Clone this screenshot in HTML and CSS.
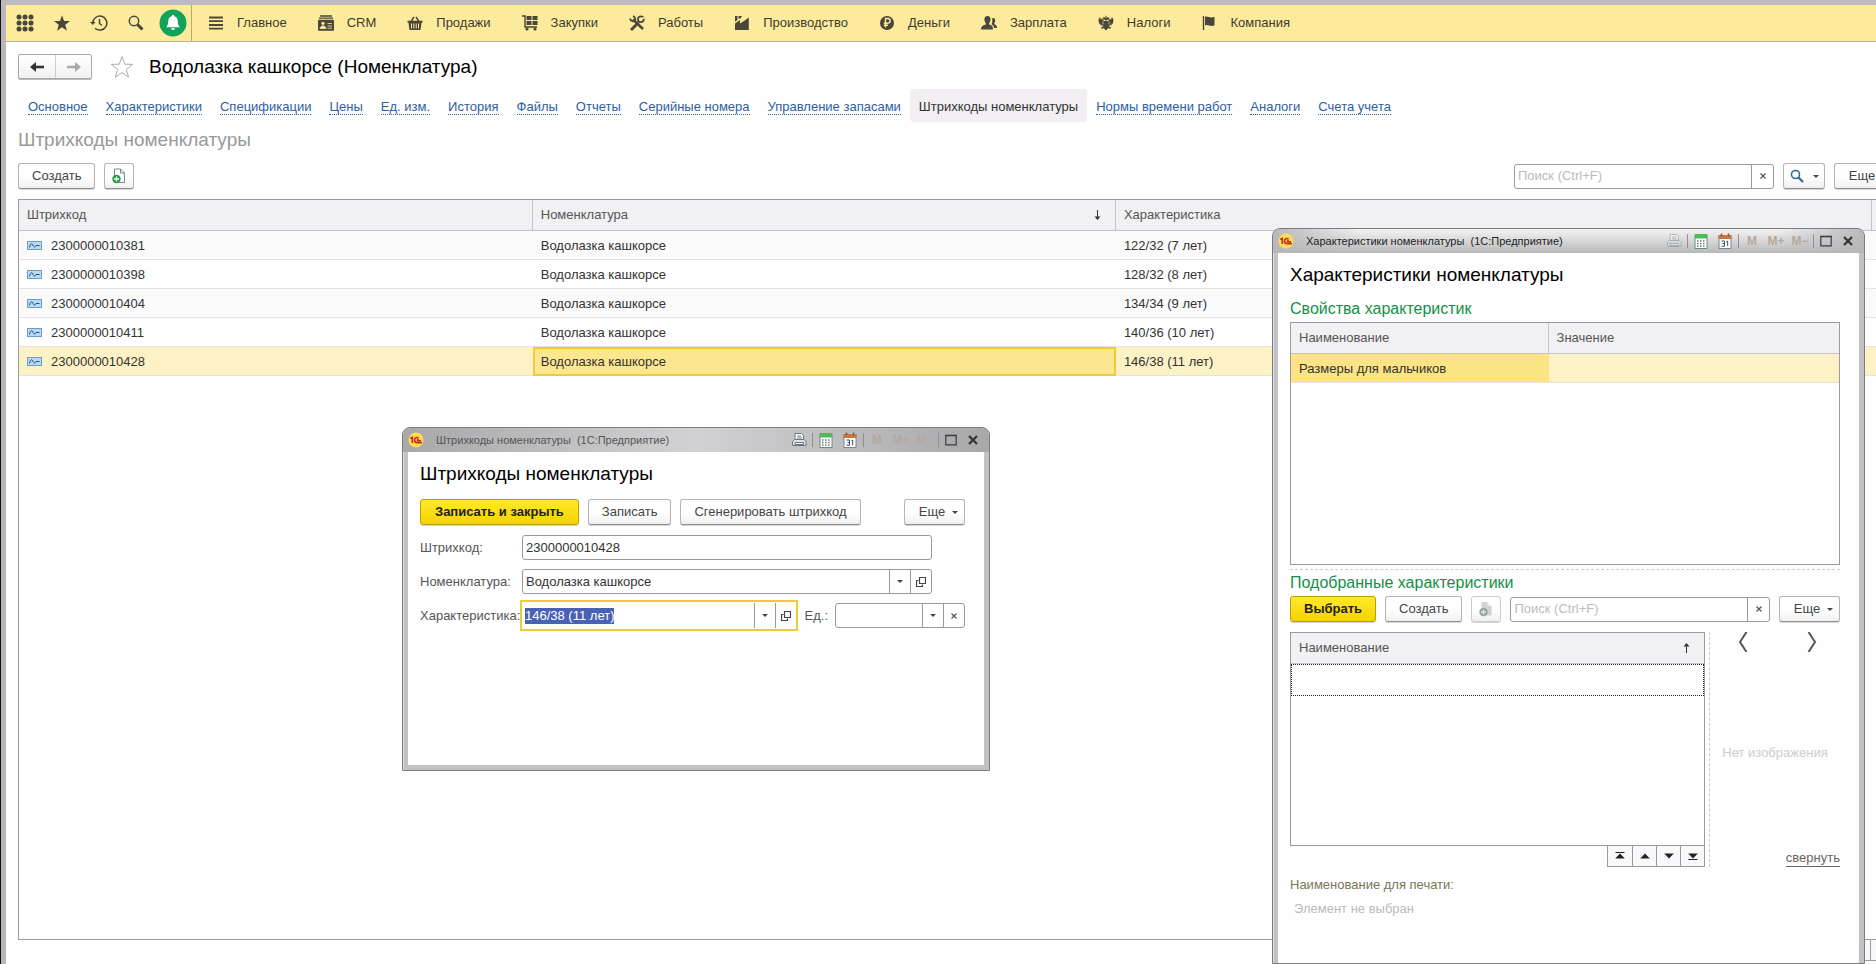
FILE: index.html
```html
<!DOCTYPE html>
<html lang="ru">
<head>
<meta charset="utf-8">
<title>Водолазка кашкорсе (Номенклатура)</title>
<link rel="stylesheet" href="styles.css">
</head>
<body>
<svg class="sprite" aria-hidden="true">
  <symbol id="i-printer" viewBox="0 0 16 16">
    <path d="M4 8V1.500h6.500l2 2V8" fill="#fff" stroke="#6d7680"/>
    <path d="M6 4h4M6 6h5" stroke="#6d7680"/>
    <path d="M1.500 9.500 3.500 7.500h9.500l2 2v4H1.500z" fill="#dfe3e8" stroke="#6d7680"/>
    <path d="M4 10.500h8.500v2H4z" fill="#fff" stroke="#6d7680"/>
  </symbol>
  <symbol id="i-calc" viewBox="0 0 14 16">
    <path d="M1 1.500h12v14H1z" fill="#fff" stroke="#6b8a70"/>
    <path d="M1 1h12v4.500H1z" fill="#4cbb58"/>
    <path d="M3 8h8M3 10.500h8M3 13h8" stroke="#6b7480" stroke-width="1.500" stroke-dasharray="1.500 1.500"/>
  </symbol>
  <symbol id="i-cal" viewBox="0 0 14 16">
    <path d="M1 2.500h12v13H1z" fill="#fff" stroke="#7a828c"/>
    <path d="M.5 2h13v4H.5z" fill="#c9793c"/>
    <path d="M3.500.5v3M10.500.5v3" stroke="#8a5a34" stroke-width="1.500"/>
    <path d="M3.500 8h3v5.200h-3M4.500 10.500h2M8.300 9l1.400-1v5.300" fill="none" stroke="#3f4c63"/>
  </symbol>
  <symbol id="i-max" viewBox="0 0 12 12"><path d="M.8 1.500h10.400v9.300H.8z" fill="none" stroke="#3a3c40" stroke-width="1.200"/><path d="M.2 1.500h11.600" stroke="#3a3c40" stroke-width="1.600"/></symbol>
  <symbol id="i-close" viewBox="0 0 12 12"><path d="M2 2l8 8M10 2l-8 8" stroke="#333" stroke-width="2.200"/></symbol>
  <symbol id="i-logo" viewBox="0 0 16 16">
    <circle cx="8" cy="8" r="7.500" fill="#fbdc55"/>
    <path d="M2.300 6.500 4.300 5.300V11M10.500 6.200C9 4.800 6.500 5.800 6.500 8c0 1.800 1.300 2.600 2.800 2.600H14M10.700 7.700c-1-.5-1.700.8-.6 1H13" fill="none" stroke="#cc2a1c" stroke-width="1.600"/>
  </symbol>
  <symbol id="i-x" viewBox="0 0 8 8"><path d="M1.500 1.500l5 5M6.500 1.500l-5 5" stroke="#555" stroke-width="1.200"/></symbol>
  <symbol id="i-open" viewBox="0 0 10 10"><path d="M3.500.5h6v6h-6z" fill="none" stroke="#444" stroke-width="1.200"/><path d="M2.500 3.500h-2v6h6v-2" fill="none" stroke="#444" stroke-width="1.200"/></symbol>
  <symbol id="i-newdoc" viewBox="0 0 16 16">
    <path d="M3.500 1h6l4 4v9.500h-10z" fill="#fff" stroke="#7d838a"/><path d="M9.500 1v4h4" fill="none" stroke="#7d838a"/>
    <circle cx="5.500" cy="11" r="4.200" fill="#2a9a3e"/><path d="M5.500 8.500v5M3 11h5" stroke="#fff" stroke-width="1.300"/>
  </symbol>
  <symbol id="i-newdoc-off" viewBox="0 0 16 16">
    <path d="M3.500 1h6l4 4v9.500h-10z" fill="#cfd3d3"/><path d="M9.500 1v4h4" fill="#eee"/>
    <circle cx="5.500" cy="11" r="4.200" fill="#9aa09e"/><path d="M5.500 8.500v5M3 11h5" stroke="#e4e6e6" stroke-width="1.300"/>
  </symbol>
  <symbol id="i-row" viewBox="0 0 15 9"><rect x=".5" y=".5" width="14" height="8" fill="#b9d8f2" stroke="#6f9cc4"/><path d="M2.500 6.500C3.500 2 5 2 6 4.200S8 6.800 9 4.500h3.500" fill="none" stroke="#1f4f86"/></symbol>
  <symbol id="i-star" viewBox="0 0 24 24"><path d="M12 1.500l2.700 7.700 8 .2-6.400 5 2.300 7.800L12 17.600l-6.600 4.600 2.300-7.800-6.400-5 8-.2z"/></symbol>
  <symbol id="i-first" viewBox="0 0 10 8"><path d="M.5.5h9" stroke="#222"/><path d="M5 1.500 9.800 6.500H.2z" fill="#222"/></symbol>
  <symbol id="i-up" viewBox="0 0 10 8"><path d="M5 1.500 9.800 6.500H.2z" fill="#222"/></symbol>
  <symbol id="i-down" viewBox="0 0 10 8"><path d="M5 6.500 9.800 1.500H.2z" fill="#222"/></symbol>
  <symbol id="i-last" viewBox="0 0 10 8"><path d="M.5 7.500h9" stroke="#222"/><path d="M5 6.500 9.800 1.500H.2z" fill="#222"/></symbol>
</svg>

<div class="app">
  <header class="menubar">
    <div class="quick">
      <button class="qbtn" aria-label="Меню"><svg width="18" height="18" viewBox="0 0 18 18" fill="#4a463a"><circle cx="3" cy="3" r="2.500"/><circle cx="9" cy="3" r="2.500"/><circle cx="15" cy="3" r="2.500"/><circle cx="3" cy="9" r="2.500"/><circle cx="9" cy="9" r="2.500"/><circle cx="15" cy="9" r="2.500"/><circle cx="3" cy="15" r="2.500"/><circle cx="9" cy="15" r="2.500"/><circle cx="15" cy="15" r="2.500"/></svg></button>
      <button class="qbtn" aria-label="Избранное"><svg width="18" height="18" viewBox="0 0 24 24" fill="#4a463a"><use href="#i-star"/></svg></button>
      <button class="qbtn" aria-label="История"><svg width="18" height="18" viewBox="0 0 18 18" fill="none" stroke="#4a463a" stroke-width="1.500"><path d="M2.800 9a7 7 0 1 1 2.200 5.200"/><path d="M9.500 5v4.500l2.500 2"/><path d="M0 8h5.600L2.800 11z" fill="#4a463a" stroke="none"/></svg></button>
      <button class="qbtn" aria-label="Поиск"><svg width="18" height="18" viewBox="0 0 18 18" fill="none" stroke="#4a463a"><circle cx="7" cy="7" r="4.700" stroke-width="1.500"/><path d="M10.500 10.500l5 5" stroke-width="3"/></svg></button>
      <button class="qbtn" aria-label="Уведомления"><svg width="28" height="28" viewBox="0 0 28 28"><circle cx="14" cy="14" r="13.500" fill="#12a35b"/><path d="M14 6c.9 0 1.300.6 1.300 1.300 2.700.8 3.500 3 3.500 5.500 0 2.800.8 4 2 5.400H7.200c1.200-1.400 2-2.600 2-5.400 0-2.500.8-4.700 3.500-5.500C12.700 6.600 13.100 6 14 6zM12 19.200h4c0 2.300-4 2.300-4 0z" fill="#fff"/></svg></button>
    </div>
    <nav class="sections">
      <a href="#"><svg viewBox="0 0 16 16"><path d="M1 2.500h14M1 6.200h14M1 10h14M1 13.700h14" stroke="#4a463a" stroke-width="1.800"/></svg>Главное</a>
      <a href="#"><svg viewBox="0 0 16 16"><path d="M2 1h12M1 3.200h14" stroke="#4a463a" stroke-width="1.300"/><rect y="4.700" width="16" height="11" rx="1" fill="#4a463a"/><circle cx="5" cy="8.300" r="1.600" fill="#fdeb9d"/><path d="M2 13.500c0-3.500 6-3.500 6 0zM9.500 8.500H14M9.500 11H14M9.500 13.200H14" fill="#fdeb9d" stroke="#fdeb9d" stroke-width=".8"/></svg>CRM</a>
      <a href="#"><svg viewBox="0 0 16 16"><path d="M4 6.500 7 2M12 6.500 9 2" stroke="#4a463a" stroke-width="1.400"/><path d="M.5 5.800h15v2h-1L13.500 15h-11L1.500 7.800h-1z" fill="#4a463a"/><path d="M4.500 8.500v5M6.800 8.500v5M9.200 8.500v5M11.500 8.500v5" stroke="#fdeb9d"/></svg>Продажи</a>
      <a href="#"><svg viewBox="0 0 16 16" fill="#4a463a"><path d="M0 1h3v11h12" fill="none" stroke="#4a463a" stroke-width="1.400"/><path d="M4.500 1h5v4h-5zM10.500 1h5v4h-5zM4.500 6h5v4h-5zM10.500 6h5v4h-5z"/><circle cx="5" cy="14" r="1.600"/><circle cx="13" cy="14" r="1.600"/></svg>Закупки</a>
      <a href="#"><svg viewBox="0 0 16 16" fill="none" stroke="#4a463a"><path d="M4 4.500 14 14" stroke-width="2.500"/><path d="M1 3.500c.5 3 4 3.500 5 1.500S5 1.500 4 1.200" stroke-width="1.800"/><path d="M2 15l7.500-7.500" stroke-width="2.800"/><circle cx="11.800" cy="4.200" r="2.900" stroke-width="1.800"/><path d="M12 4l3.500-1.500" stroke="#fdeb9d" stroke-width="1.500"/></svg>Работы</a>
      <a href="#"><svg viewBox="0 0 16 16" fill="#4a463a"><path d="M1 15V8.500l5-3.500v3.500l4-2.500 4.800-3.500V15zM1 1h2.500v4L1 6.800zM4.500 1H8L6.500 3.500h-2z"/></svg>Производство</a>
      <a href="#"><svg viewBox="0 0 16 16"><circle cx="8" cy="8" r="7" fill="#4a463a"/><path d="M6.500 12.500v-9h2.200c3.300 0 3.300 4.700 0 4.700H4.800M4.800 10.300H9" fill="none" stroke="#fdeb9d" stroke-width="1.400"/></svg>Деньги</a>
      <a href="#"><svg viewBox="0 0 16 16" fill="#4a463a"><path d="M6.500 1c4 0 3.600 5 1.700 7v1.500C11 10.500 12 11 12 14.500H0C0 11.500 1.500 10.500 4.800 9.500V8C2.900 6 2.500 1 6.500 1z"/><path d="M12 3c2.800 0 2.700 3.500 1.400 5v1.200c1.700.5 2.600 1.300 2.600 3.800h-3c0-2-1-3-2.500-3.800C11.500 7.500 11.500 5 11 3.400z"/></svg>Зарплата</a>
      <a href="#"><svg viewBox="0 0 16 16" fill="#4a463a"><path d="M7.600 5.500 6.200 4.600 4.600 4.900 5.200 3.600 4.600 2.500 6.600 2.300 7.400 3.300 7.500.8h1l.1 2.500.8-1 2 .2-.6 1.100.6 1.300-1.600-.3-1.400.9z"/><path d="M1.200 2.200 2.300 4.600 2.800 2 3.800 5 4.500 3.400 5.500 6h5l1-2.600.7 1.600 1-3 .5 2.600 1.100-2.400C15.800 5 15.600 7.300 14.400 9.300L13.800 8.400 13.600 10.400 12.600 9.400 12.300 11.200 11.200 10.200 10.800 11.400 13 12.300 12.200 14 10.200 12.900 9.500 14 8 15.600 6.500 14 5.800 12.900 3.800 14 3 12.300 5.200 11.400 4.800 10.200 3.700 11.200 3.400 9.400 2.400 10.400 2.200 8.400 1.600 9.300C.4 7.300.2 5 1.200 2.200z"/><path d="M5 6.500v3M11 6.500v3" stroke="#fdeb9d" stroke-width=".7"/></svg>Налоги</a>
      <a href="#"><svg viewBox="0 0 16 16"><path d="M2.500 1v14" stroke="#4a463a" stroke-width="1.400"/><path d="M4 2c2.500-1.500 4 1.500 9.500 0v8.500C8.500 12 7 9 4 10.500z" fill="#4a463a"/></svg>Компания</a>
    </nav>
  </header>

  <main class="page">
    <div class="titlebar">
      <div class="history">
        <button aria-label="Назад"><svg width="16" height="12" viewBox="0 0 16 12"><path d="M1 6l6-5v10z" fill="#333"/><path d="M5 6h10" stroke="#333" stroke-width="2.600"/></svg></button>
        <button aria-label="Вперед"><svg width="16" height="12" viewBox="0 0 16 12"><path d="M15 6L9 1v10z" fill="#aaa"/><path d="M1 6h10" stroke="#aaa" stroke-width="2.600"/></svg></button>
      </div>
      <svg class="fav" viewBox="0 0 24 24" fill="#fff" stroke="#a9adb3"><use href="#i-star"/></svg>
      <h1>Водолазка кашкорсе (Номенклатура)</h1>
    </div>

    <nav class="tabs">
      <a href="#"><span>Основное</span></a><a href="#"><span>Характеристики</span></a><a href="#"><span>Спецификации</span></a><a href="#"><span>Цены</span></a><a href="#"><span>Ед. изм.</span></a><a href="#"><span>История</span></a><a href="#"><span>Файлы</span></a><a href="#"><span>Отчеты</span></a><a href="#"><span>Серийные номера</span></a><a href="#"><span>Управление запасами</span></a><a href="#" class="active"><span>Штрихкоды номенклатуры</span></a><a href="#"><span>Нормы времени работ</span></a><a href="#"><span>Аналоги</span></a><a href="#"><span>Счета учета</span></a>
    </nav>

    <h2 class="subtitle">Штрихкоды номенклатуры</h2>

    <div class="list-area">
      <div class="commands">
        <button class="btn">Создать</button>
        <button class="btn icon" aria-label="Скопировать"><svg width="16" height="16"><use href="#i-newdoc"/></svg></button>
        <div class="field search push"><input type="text" placeholder="Поиск (Ctrl+F)" aria-label="Поиск"><button aria-label="Очистить"><svg width="8" height="8"><use href="#i-x"/></svg></button></div>
        <button class="btn find" aria-label="Найти"><svg width="14" height="14" viewBox="0 0 14 14" fill="none" stroke="#33689c"><circle cx="5.500" cy="5.500" r="4" stroke-width="1.600"/><path d="M8.500 8.500l4.500 4.500" stroke-width="2.300"/></svg><i class="caret"></i></button>
        <button class="btn more">Еще<i class="caret"></i></button>
      </div>

      <div class="panel main-panel">
        <table class="grid main-grid">
          <colgroup><col class="c-code"><col class="c-item"><col class="c-char"><col></colgroup>
          <thead><tr><th>Штрихкод</th><th>Номенклатура<svg class="sort" viewBox="0 0 7 12"><path d="M3.500 1v9" stroke="#333"/><path d="M.5 7.500h6L3.500 11z" fill="#333"/></svg></th><th>Характеристика</th><th></th></tr></thead>
          <tbody>
            <tr><td><svg class="rowicon"><use href="#i-row"/></svg>2300000010381</td><td>Водолазка кашкорсе</td><td>122/32 (7 лет)</td><td></td></tr>
            <tr><td><svg class="rowicon"><use href="#i-row"/></svg>2300000010398</td><td>Водолазка кашкорсе</td><td>128/32 (8 лет)</td><td></td></tr>
            <tr><td><svg class="rowicon"><use href="#i-row"/></svg>2300000010404</td><td>Водолазка кашкорсе</td><td>134/34 (9 лет)</td><td></td></tr>
            <tr><td><svg class="rowicon"><use href="#i-row"/></svg>2300000010411</td><td>Водолазка кашкорсе</td><td>140/36 (10 лет)</td><td></td></tr>
            <tr class="selected"><td><svg class="rowicon"><use href="#i-row"/></svg>2300000010428</td><td class="current">Водолазка кашкорсе</td><td>146/38 (11 лет)</td><td></td></tr>
          </tbody>
        </table>
      </div>
      <div class="pager">
        <button aria-label="В начало"><svg><use href="#i-first"/></svg></button><button aria-label="Вверх"><svg><use href="#i-up"/></svg></button><button aria-label="Вниз"><svg><use href="#i-down"/></svg></button><button aria-label="В конец"><svg><use href="#i-last"/></svg></button>
      </div>
    </div>
  </main>

  <section class="window win-barcode">
    <div class="caption">
      <svg class="logo"><use href="#i-logo"/></svg>
      <span class="caption-text">Штрихкоды номенклатуры&nbsp; (1С:Предприятие)</span>
      <button aria-label="Печать"><svg width="16" height="16"><use href="#i-printer"/></svg></button><i class="sep"></i>
      <button aria-label="Калькулятор"><svg width="14" height="16"><use href="#i-calc"/></svg></button>
      <button aria-label="Календарь"><svg width="14" height="16"><use href="#i-cal"/></svg></button><i class="sep"></i>
      <button class="mem">M</button><button class="mem">M+</button><button class="mem">M−</button><i class="sep"></i>
      <button class="win-btn" aria-label="Развернуть"><svg width="12" height="12"><use href="#i-max"/></svg></button>
      <button class="win-btn" aria-label="Закрыть"><svg width="12" height="12"><use href="#i-close"/></svg></button>
    </div>
    <div class="client">
      <h2>Штрихкоды номенклатуры</h2>
      <div class="commands">
        <button class="btn primary">Записать и закрыть</button>
        <button class="btn">Записать</button>
        <button class="btn">Сгенерировать штрихкод</button>
        <button class="btn more push">Еще<i class="caret"></i></button>
      </div>
      <div class="form">
        <label for="f-code">Штрихкод:</label>
        <div class="field short"><input id="f-code" type="text" value="2300000010428"></div>
        <label for="f-item">Номенклатура:</label>
        <div class="field short"><input id="f-item" type="text" value="Водолазка кашкорсе"><button aria-label="Список"><i class="caret"></i></button><button aria-label="Открыть"><svg width="10" height="10"><use href="#i-open"/></svg></button></div>
        <label for="f-char">Характеристика:</label>
        <div class="pair">
          <div class="field focused"><input id="f-char" type="text" value="146/38 (11 лет)"><button aria-label="Список"><i class="caret"></i></button><button aria-label="Открыть"><svg width="10" height="10"><use href="#i-open"/></svg></button></div>
          <label for="f-unit">Ед.:</label>
          <div class="field unit"><input id="f-unit" type="text"><button aria-label="Список"><i class="caret"></i></button><button aria-label="Очистить"><svg width="8" height="8"><use href="#i-x"/></svg></button></div>
        </div>
      </div>
    </div>
  </section>

  <section class="window active win-char">
    <div class="caption">
      <svg class="logo"><use href="#i-logo"/></svg>
      <span class="caption-text">Характеристики номенклатуры&nbsp; (1С:Предприятие)</span>
      <button aria-label="Печать" class="faded"><svg width="16" height="16"><use href="#i-printer"/></svg></button><i class="sep"></i>
      <button aria-label="Калькулятор"><svg width="14" height="16"><use href="#i-calc"/></svg></button>
      <button aria-label="Календарь"><svg width="14" height="16"><use href="#i-cal"/></svg></button><i class="sep"></i>
      <button class="mem">M</button><button class="mem">M+</button><button class="mem">M−</button><i class="sep"></i>
      <button class="win-btn" aria-label="Развернуть"><svg width="12" height="12"><use href="#i-max"/></svg></button>
      <button class="win-btn" aria-label="Закрыть"><svg width="12" height="12"><use href="#i-close"/></svg></button>
    </div>
    <div class="client">
      <h2>Характеристики номенклатуры</h2>
      <h3>Свойства характеристик</h3>
      <div class="panel props">
        <table class="grid">
          <colgroup><col class="c-name"><col></colgroup>
          <thead><tr><th>Наименование</th><th>Значение</th></tr></thead>
          <tbody><tr class="selected"><td class="mark">Размеры для мальчиков</td><td></td></tr></tbody>
        </table>
      </div>
      <h3 class="split">Подобранные характеристики</h3>
      <div class="commands">
        <button class="btn primary">Выбрать</button>
        <button class="btn">Создать</button>
        <button class="btn icon" disabled aria-label="Скопировать"><svg width="16" height="16"><use href="#i-newdoc-off"/></svg></button>
        <div class="field search"><input type="text" placeholder="Поиск (Ctrl+F)" aria-label="Поиск характеристик"><button aria-label="Очистить"><svg width="8" height="8"><use href="#i-x"/></svg></button></div>
        <button class="btn more push">Еще<i class="caret"></i></button>
      </div>
      <div class="lower">
        <div class="picked">
          <div class="panel">
            <table class="grid">
              <thead><tr><th>Наименование<svg class="sort" viewBox="0 0 7 12"><path d="M3.500 2v9" stroke="#333"/><path d="M.5 4.500h6L3.500 1z" fill="#333"/></svg></th></tr></thead>
              <tbody><tr><td class="dotted"></td></tr></tbody>
            </table>
          </div>
          <div class="pager">
            <button aria-label="В начало"><svg><use href="#i-first"/></svg></button><button aria-label="Вверх"><svg><use href="#i-up"/></svg></button><button aria-label="Вниз"><svg><use href="#i-down"/></svg></button><button aria-label="В конец"><svg><use href="#i-last"/></svg></button>
          </div>
        </div>
        <div class="preview">
          <div class="arrows">
            <button aria-label="Предыдущее"><svg width="10" height="20" viewBox="0 0 10 20"><path d="M8.500 0 2 10l6.500 10" fill="none" stroke="#555" stroke-width="2"/></svg></button>
            <button aria-label="Следующее"><svg width="10" height="20" viewBox="0 0 10 20"><path d="M1.500 0 8 10 1.500 20" fill="none" stroke="#555" stroke-width="2"/></svg></button>
          </div>
          <p class="empty">Нет изображения</p>
          <a href="#" class="collapse">свернуть</a>
        </div>
      </div>
      <div class="print">
        <p class="print-label">Наименование для печати:</p>
        <p class="print-value">Элемент не выбран</p>
      </div>
    </div>
  </section>
</div>
<script src="app.js"></script>
</body>
</html>
```
FILE: styles.css
```css
* { box-sizing: border-box; }
body {
  margin: 0;
  font: 13px/16px "Liberation Sans", Arial, sans-serif;
  color: #333;
  background: #fff;
}
h1, h2, h3, p { margin: 0; font-weight: normal; }
h1, h2 { font-size: 19px; line-height: 24px; color: #000; }
h3 { font-size: 16px; line-height: 24px; color: #149048; }
button, input { font: inherit; color: inherit; margin: 0; }
button { padding: 0; border: 0; background: none; }
a { text-decoration: none; }
.sprite { position: absolute; width: 0; height: 0; }

.app {
  position: relative;
  display: flex;
  flex-direction: column;
  height: 100vh;
  overflow: hidden;
  border-left: 1px solid #111;
  background: #fefefe;
  box-shadow: inset 5px 0 0 #b9b7bb;
  padding-left: 5px;
}

/* section bar */
.menubar {
  flex: none;
  display: flex;
  height: 42px;
  border-top: 5px solid #bdbbc0;
  border-bottom: 1px solid #b9b48f;
  background: #fdeb9d;
}
.quick { display: flex; align-items: center; border-right: 1px solid #b3a878; }
.qbtn { display: flex; align-items: center; justify-content: center; width: 37px; height: 36px; }
.sections { display: flex; align-items: center; gap: 31px; padding-left: 16px; }
.sections a { display: flex; align-items: center; gap: 13px; color: #3e3a30; }
.sections svg { width: 16px; height: 16px; }

/* page */
.page {
  flex: 1;
  min-height: 0;
  display: flex;
  flex-direction: column;
  padding: 12px 0 3px 12px;
}
.titlebar { display: flex; align-items: center; height: 25px; }
.history { display: flex; border: 1px solid #a8a8ac; border-radius: 2px; background: linear-gradient(#fff, #f1f1f3); box-shadow: 0 1px 0 #bbb; }
.history button { display: flex; align-items: center; justify-content: center; width: 36px; height: 23px; }
.history button + button { border-left: 1px solid #ccc; }
.fav { width: 24px; height: 24px; margin: 0 15px 0 18px; }
.tabs { display: flex; height: 33px; margin: 10px 0 0 1px; }
.tabs a { display: flex; align-items: center; padding: 2px 9px 0; color: #2f5f9e; white-space: nowrap; border-radius: 4px; }
.tabs span { border-bottom: 1px dotted #2f5f9e; line-height: 15px; }
.tabs .active { background: #f1eff1; color: #333; }
.tabs .active span { border-bottom-color: transparent; }
.subtitle { margin-top: 6px; color: #999; }
.list-area { flex: 1; min-height: 0; display: flex; flex-direction: column; margin: 11px -19px 0 0; }

/* buttons and fields */
.commands { display: flex; align-items: center; gap: 9px; }
.push { margin-left: auto; }
.btn {
  display: flex;
  align-items: center;
  justify-content: center;
  height: 26px;
  padding: 0 13px;
  border: 1px solid #b4b4b8;
  border-bottom-color: #8f8f94;
  border-radius: 3px;
  background: linear-gradient(#fff 50%, #f0f0f2);
  color: #444;
  white-space: nowrap;
  box-shadow: 0 1px 0 #d5d5d5;
}
.btn.primary { background: linear-gradient(#ffe92c, #f5d300); border-color: #b8a000; color: #222; font-weight: bold; }
.btn.icon { width: 30px; padding: 0; }
.btn.icon:disabled { border-color: #ccc; }
.btn.find { gap: 9px; width: 42px; padding: 0; }
.btn.more { gap: 7px; width: 61px; padding: 0 4px 0 12px; }
.caret { border: solid transparent; border-width: 3px 3px 0; border-top-color: #444; }
.field {
  display: flex;
  height: 25px;
  border: 1px solid #9a9a9e;
  border-radius: 3px;
  background: #fff;
}
.field input { flex: 1; min-width: 0; border: 0; padding: 0 3px; outline: 0; background: none; }
.field input::placeholder { color: #bbb; opacity: 1; }
.field button { display: flex; align-items: center; justify-content: center; width: 21px; border-left: 1px solid #9a9a9e; }
.search { width: 260px; }
.search button { width: 22px; }

/* tables */
.panel { border: 1px solid #9a9a9e; background: #fefefe; overflow: hidden; }
.grid { width: 100%; border-collapse: separate; border-spacing: 0; table-layout: fixed; }
.grid th {
  height: 31px;
  padding: 0 8px;
  border-bottom: 1px solid #c4c4c8;
  border-right: 1px solid #c4c4c8;
  background: #f1f0f2;
  color: #555;
  font-weight: normal;
  text-align: left;
}
.grid th:last-child { border-right: 0; }
.grid td { height: 29px; padding: 2px 8px 0; border-bottom: 1px solid #e3e3e6; }
.grid tr:nth-child(odd) td { background: #fafafb; }
.grid tr.selected td { background: #fdf2c5; }
.grid tr.selected td.current { background: #fce68f; outline: 2px solid #efca3c; outline-offset: -2px; }
.grid tr.selected td.mark { background: #fce484; }
.main-panel { flex: 1; min-height: 0; margin-top: 10px; }
.c-code { width: 27.4%; }
.c-item { width: 31.1%; }
.c-char { width: 40.3%; }
.rowicon { width: 15px; height: 9px; margin-right: 9px; vertical-align: 0; }
.sort { float: right; width: 7px; height: 12px; margin: 2px 6px 0 0; }
.pager { align-self: flex-end; display: flex; margin-top: -1px; border: 1px solid #9a9a9e; }
.pager button { display: flex; align-items: center; justify-content: center; width: 24px; height: 20px; background: #f8f8fa; }
.pager button + button { border-left: 1px solid #9a9a9e; }
.pager svg { width: 10px; height: 8px; }

/* floating windows */
.window {
  position: absolute;
  display: flex;
  flex-direction: column;
  padding: 0 5px 5px;
  border: 1px solid #7c7c80;
  border-radius: 8px 8px 0 0;
  background: #c2c2c5;
  box-shadow: inset 1px 1px 0 #dcdcde;
}
.win-barcode { left: 401px; top: 427px; width: 588px; height: 344px; }
.win-char { right: 11px; top: 228px; bottom: 0; width: 593px; padding-bottom: 0; }
.window.active .caption { background: linear-gradient(90deg, #b8b8ba, transparent 15%, transparent 85%, #b8b8ba), linear-gradient(#f4f4f5, #b9b9bb); }
.caption {
  flex: none;
  display: flex;
  align-items: center;
  height: 24px;
  margin: 0 -5px;
  padding: 0 5px;
  border-radius: 7px 7px 0 0;
  background: linear-gradient(90deg, #a8a8aa, #d2d2d4 50%, #a8a8aa);
  font-size: 11px;
  color: #555;
}
.active .caption { color: #222; }
.logo { width: 16px; height: 16px; }
.caption-text { margin: 0 auto 0 12px; white-space: nowrap; }
.caption button { display: flex; align-items: center; justify-content: center; width: 24px; height: 20px; }
.caption .win-btn { width: 22px; }
.caption .mem { color: #b3a9a0; font-size: 12px; font-weight: bold; }
.faded { opacity: .4; }
.sep { width: 1px; height: 14px; margin: 0 1px; background: #8f8f93; }
.client { flex: 1; min-height: 0; display: flex; flex-direction: column; background: #fefefe; padding: 10px 19px 0 12px; }

.win-barcode .commands { margin-top: 13px; }
.win-barcode .btn.primary { padding: 0 14px; }
.form { display: grid; grid-template-columns: 102px 1fr; row-gap: 9px; align-items: center; margin-top: 10px; }
.form label { color: #555; white-space: nowrap; }
.short { margin-right: 33px; }
.pair { display: flex; align-items: center; height: 25px; }
.focused { flex: 1; height: 31px; margin-left: -2px; border: 2px solid #efca3c; border-radius: 0; }
.focused button { height: 25px; align-self: center; }
.focused input::selection { background: #4a62b4; color: #fff; }
.pair label { margin: 0 7px; }
.unit { width: 130px; }

.win-char h3 { margin-top: 10px; }
.props { height: 243px; margin-top: 1px; }
.c-name { width: 47%; }
.win-char h3.split { margin-top: 4px; padding-top: 1px; border-top: 1px dashed #ccc; }
.win-char .commands { margin-top: 1px; }
.win-char .search { flex: 1; }
.lower { flex: 1; min-height: 0; display: flex; margin-top: 10px; }
.picked { flex: 3; display: flex; flex-direction: column; padding-right: 4px; border-right: 1px dashed #ccc; }
.picked .panel { flex: 1; }
.grid tr td.dotted { height: 32px; border: 1px dotted #222; background: #fefefe; }
.preview { flex: 1 0 130px; max-width: 130px; display: flex; flex-direction: column; align-items: center; justify-content: space-between; }
.arrows { align-self: stretch; display: flex; justify-content: space-between; padding: 0 23px 0 28px; }
.empty { color: #ccc; white-space: nowrap; }
.collapse { align-self: flex-end; color: #666; border-bottom: 1px solid #666; }
.print { padding: 6px 0 42px; line-height: 24px; }
.print-label { color: #7a755a; }
.print-value { padding-left: 4px; color: #bbb; }
```
FILE: app.js
```js
const field = document.getElementById("f-char");
field.focus();
field.select();
```
